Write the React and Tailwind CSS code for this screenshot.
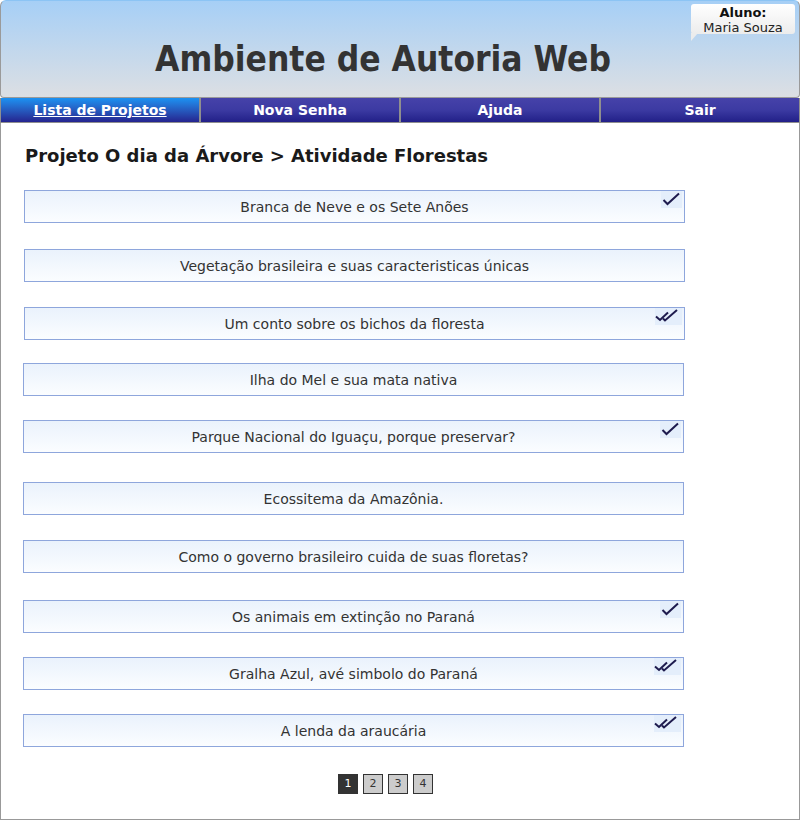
const rows = [
  { title: 'Branca de Neve e os Sete Anões', mark: 'single', gap: 'mt-0', left: 'ml-[23px]' },
  { title: 'Vegetação brasileira e suas caracteristicas únicas', mark: null, gap: 'mt-[26px]', left: 'ml-[23px]' },
  { title: 'Um conto sobre os bichos da floresta', mark: 'double', gap: 'mt-[25px]', left: 'ml-[23px]' },
  { title: 'Ilha do Mel e sua mata nativa', mark: null, gap: 'mt-[23px]', left: 'ml-[22px]' },
  { title: 'Parque Nacional do Iguaçu, porque preservar?', mark: 'single', gap: 'mt-[24px]', left: 'ml-[22px]' },
  { title: 'Ecossitema da Amazônia.', mark: null, gap: 'mt-[29px]', left: 'ml-[22px]' },
  { title: 'Como o governo brasileiro cuida de suas floretas?', mark: null, gap: 'mt-[25px]', left: 'ml-[22px]' },
  { title: 'Os animais em extinção no Paraná', mark: 'single', gap: 'mt-[27px]', left: 'ml-[22px]' },
  { title: 'Gralha Azul, avé simbolo do Paraná', mark: 'double', gap: 'mt-[24px]', left: 'ml-[22px]' },
  { title: 'A lenda da araucária', mark: 'double', gap: 'mt-[24px]', left: 'ml-[22px]' },
]

const tabs = ['Lista de Projetos', 'Nova Senha', 'Ajuda', 'Sair']

function Check({ kind }) {
  if (kind === 'single') {
    return (
      <span className="absolute right-[2px] top-0 flex h-[17px] w-[21px] items-center justify-center bg-[#e4eefb]">
        <svg width="19" height="15" viewBox="0 0 19 15">
          <path d="M1.5 8 L5.5 12 L17 1.5" fill="none" stroke="#1e1b4e" strokeWidth="2" />
        </svg>
      </span>
    )
  }
  return (
    <span className="absolute right-[2px] top-0 flex h-[17px] w-[27px] items-center justify-center bg-[#e4eefb]">
      <svg width="27" height="15" viewBox="0 0 27 15">
        <path d="M1 7.5 L5 11 L13 3.5" fill="none" stroke="#1e1b4e" strokeWidth="2" />
        <path d="M8 9.5 L10 11.5 L22 1" fill="none" stroke="#1e1b4e" strokeWidth="2" />
      </svg>
    </span>
  )
}

export default function App() {
  return (
    <div className="w-[800px] h-[820px] bg-white font-['DejaVu_Sans',sans-serif] text-[#333]">
      <header className="relative h-[98px] rounded-t-[6px] rounded-b-[4px] border border-[#9a9a9a] border-t-[#8cc4f4] bg-gradient-to-b from-[#a6cff6] to-[#dcdfe3] flex items-end justify-center pb-[16px] pr-[34px]">
        <h1 className="text-[35px] leading-[44px] font-bold text-[#333] [font-stretch:condensed]">Ambiente de Autoria Web</h1>
        <div className="absolute right-[4px] top-[3px] w-[104px] h-[30px] rounded-[3px] bg-gradient-to-b from-white to-[#ececec] text-center text-[13px] leading-[15px] pt-[1px] text-[#111]">
          <div className="font-bold">Aluno:</div>
          <div className="text-[#222]">Maria Souza</div>
          <span className="absolute left-0 top-[29px] h-0 w-0 border-t-[8px] border-r-[7px] border-t-[#ececec] border-r-transparent" />
        </div>
      </header>
      <nav className="flex h-[25px]">
        {tabs.map((t, i) => (
          <a
            key={t}
            href="#"
            className={
              'flex-1 flex items-center justify-center border-x border-b border-[#8f8f8f] pt-[1px] text-[14px] font-bold text-white ' +
              (i === 0
                ? 'bg-gradient-to-b from-[#1a92f2] to-[#24238f] underline'
                : 'bg-gradient-to-b from-[#4642a9] via-[#3c3aa2] to-[#221f88]')
            }
          >
            {t}
          </a>
        ))}
      </nav>
      <main className="h-[697px] border-x border-b border-[#999] flex flex-col">
        <h2 className="mt-[20px] ml-[24px] text-[18px] leading-[26px] font-bold text-[#1a1a1a]">
          Projeto O dia da Árvore &gt; Atividade Florestas
        </h2>
        <div className="mt-[21px] flex flex-col">
          {rows.map((r) => (
            <div
              key={r.title}
              className={'relative w-[661px] h-[33px] border border-[#8ea6dc] bg-gradient-to-b from-[#eaf2fc] to-[#fbfdff] flex items-center justify-center pt-[1px] text-[14px] text-[#333] ' + r.gap + ' ' + r.left}
            >
              {r.title}
              {r.mark && <Check kind={r.mark} />}
            </div>
          ))}
        </div>
        <div className="mt-[27px] ml-[337px] flex gap-[5px] text-[11px]">
          {[1, 2, 3, 4].map((n) => (
            <span
              key={n}
              className={
                'flex h-[20px] w-[20px] items-center justify-center border border-[#333] ' +
                (n === 1 ? 'bg-[#333] text-white' : 'bg-[#ccc] text-[#333]')
              }
            >
              {n}
            </span>
          ))}
        </div>
      </main>
    </div>
  )
}
